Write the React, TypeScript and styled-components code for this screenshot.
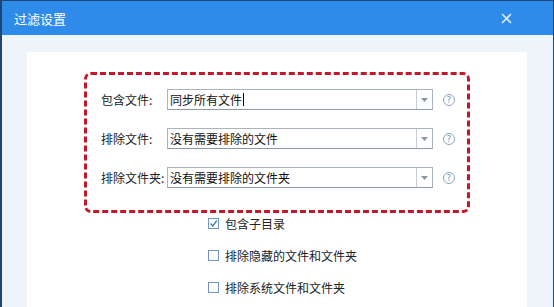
import styled, { createGlobalStyle } from 'styled-components'

const GlobalStyle = createGlobalStyle`
	html, body {
		margin: 0;
		padding: 0;
		width: 554px;
		height: 307px;
		overflow: hidden;
		font-family: "Noto Sans CJK SC", "Noto Sans", sans-serif;
	}
`

const rows = [
	{ label: '包含文件:', value: '同步所有文件', caret: true },
	{ label: '排除文件:', value: '没有需要排除的文件' },
	{ label: '排除文件夹:', value: '没有需要排除的文件夹' },
]

const options = [
	{ text: '包含子目录', checked: true },
	{ text: '排除隐藏的文件和文件夹', checked: false },
	{ text: '排除系统文件和文件夹', checked: false },
]

function App() {
	return (
		<>
			<GlobalStyle />
			<Window>
				<TitleBar>
					<Title>过滤设置</Title>
					<Close>
						<svg width="11" height="11" viewBox="0 0 11 11">
							<path d="M1 1L10 10M10 1L1 10" stroke="#dbe9fb" strokeWidth="1.6" />
						</svg>
					</Close>
				</TitleBar>

				<Body>
					<Panel>
						<Highlight>
							{ rows.map(row => (
								<Row key={row.label}>
									<Label>{ row.label }</Label>
									<Combo>
										<ComboText>
											{ row.value }
											{ row.caret && <Caret /> }
										</ComboText>
										<ComboArrow>
											<svg width="7" height="4" viewBox="0 0 7 4">
												<path d="M0 0H7L3.5 4Z" fill="#8a96a3" />
											</svg>
										</ComboArrow>
									</Combo>
									<Help>?</Help>
								</Row>
							)) }
						</Highlight>

						<Options>
							{ options.map(opt => (
								<Option key={opt.text}>
									<Check>
										{ opt.checked && (
											<svg width="9" height="9" viewBox="0 0 9 9">
												<path d="M1.5 4.5L3.8 7L7.8 1.5" stroke="#3a78c4" strokeWidth="1.3" fill="none" />
											</svg>
										) }
									</Check>
									<span>{ opt.text }</span>
								</Option>
							)) }
						</Options>
					</Panel>
				</Body>
			</Window>
		</>
	)
}

export default App

let Window = styled.div`
	width: 554px;
	height: 307px;
	box-sizing: border-box;
	display: flex;
	flex-direction: column;
	border: 1px solid #1d4772;
	border-left-width: 2px;
	border-bottom: none;
`

let TitleBar = styled.div`
	height: 34px;
	flex: none;
	background: #2f8be9;
	display: flex;
	align-items: center;
	justify-content: space-between;
	padding: 0 41px 0 12px;
`

let Title = styled.span`
	color: #ffffff;
	font-size: 13px;
`

let Close = styled.span`
	display: flex;
	align-items: center;
`

let Body = styled.div`
	flex: 1;
	background: #eff4fa;
	padding: 17px 26px 0 25px;
	display: flex;
`

let Panel = styled.div`
	flex: 1;
	background: #ffffff;
	padding: 20px 0 0 57px;
`

let Highlight = styled.div`
	width: 366px;
	height: 121px;
	border: 3px dashed #c5172c;
	border-radius: 7px;
	padding: 14px 0 0 14px;
	display: flex;
	flex-direction: column;
	gap: 18px;
`

let Row = styled.div`
	display: flex;
	align-items: center;
	height: 21px;
`

let Label = styled.span`
	width: 66px;
	font-size: 12px;
	color: #222;
`

let Combo = styled.div`
	width: 266px;
	height: 21px;
	box-sizing: border-box;
	border: 1px solid #a9b4bf;
	border-bottom-color: #8d99a5;
	display: flex;
	align-items: stretch;
`

let ComboText = styled.div`
	flex: 1;
	display: flex;
	align-items: center;
	padding-left: 2px;
	font-size: 12px;
	color: #111;
`

let Caret = styled.span`
	width: 1px;
	height: 13px;
	background: #000;
	margin-left: 1px;
`

let ComboArrow = styled.div`
	width: 15px;
	border-left: 1px solid #c4ccd4;
	display: flex;
	align-items: center;
	justify-content: center;
`

let Help = styled.span`
	width: 10px;
	height: 10px;
	margin-left: 10px;
	border: 1px solid #8ea6c6;
	border-radius: 50%;
	color: #7c96ba;
	font-size: 9px;
	line-height: 10px;
	text-align: center;
	font-family: "DejaVu Sans", sans-serif;
`

let Options = styled.div`
	display: flex;
	flex-direction: column;
	gap: 13px;
	margin: 1px 0 0 124px;
`

let Option = styled.label`
	display: flex;
	align-items: center;
	gap: 6px;
	height: 19px;
	font-size: 12px;
	color: #222;
`

let Check = styled.span`
	width: 11px;
	height: 11px;
	box-sizing: border-box;
	border: 1px solid #6f96c7;
	display: flex;
	align-items: center;
	justify-content: center;
`
